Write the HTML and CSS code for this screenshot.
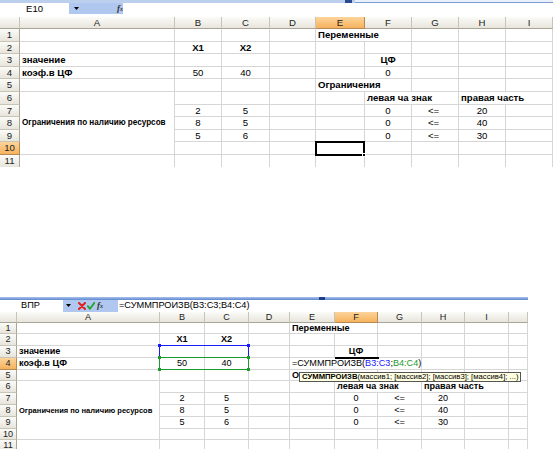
FILE: index.html
```html
<!DOCTYPE html>
<html lang="ru">
<head>
<meta charset="utf-8">
<link rel="stylesheet" href="styles.css">
</head>
<body>
<div class="page">
  <div class="sheet sheet-top">
    <div class="strip strip-top"><div class="strip-gap"></div><div class="strip-knob"></div><div class="strip-box"></div></div>
    <div class="fbar fbar-top">
      <div class="namebox">E10</div>
      <div class="fbtools">
        <svg class="dd" width="5" height="3" viewBox="0 0 5 3"><path d="M0 0h5L2.5 3z" fill="#000"/></svg>
        <span class="fx fx-top">f<small>x</small></span>
      </div>
      <div class="fbinput"></div>
    </div>
    <div class="grid g-top">
      <div class="ch"></div><div class="ch">A</div><div class="ch">B</div><div class="ch">C</div><div class="ch">D</div><div class="ch hl">E</div><div class="ch">F</div><div class="ch">G</div><div class="ch">H</div><div class="ch">I</div>

      <div class="rh">1</div><div class="c"></div><div class="c"></div><div class="c"></div><div class="c"></div><div class="c s2 b">Переменные</div><div class="c"></div><div class="c"></div><div class="c"></div>

      <div class="rh">2</div><div class="c"></div><div class="c b ctr">X1</div><div class="c b ctr">X2</div><div class="c"></div><div class="c"></div><div class="c"></div><div class="c"></div><div class="c"></div><div class="c"></div>

      <div class="rh">3</div><div class="c b">значение</div><div class="c"></div><div class="c"></div><div class="c"></div><div class="c"></div><div class="c b ctr">ЦФ</div><div class="c"></div><div class="c"></div><div class="c"></div>

      <div class="rh">4</div><div class="c b">коэф.в ЦФ</div><div class="c ctr">50</div><div class="c ctr">40</div><div class="c"></div><div class="c"></div><div class="c ctr">0</div><div class="c"></div><div class="c"></div><div class="c"></div>

      <div class="rh">5</div><div class="c"></div><div class="c"></div><div class="c"></div><div class="c"></div><div class="c s2 b">Ограничения</div><div class="c"></div><div class="c"></div><div class="c"></div>

      <div class="rh">6</div><div class="c merge b small">Ограничения по наличию ресурсов</div><div class="c"></div><div class="c"></div><div class="c"></div><div class="c"></div><div class="c s2 b">левая ча знак</div><div class="c s2 b">правая часть</div>

      <div class="rh">7</div><div class="c ctr">2</div><div class="c ctr">5</div><div class="c"></div><div class="c"></div><div class="c ctr f-val">0</div><div class="c ctr g-val">&lt;=</div><div class="c ctr">20</div><div class="c"></div>

      <div class="rh">8</div><div class="c ctr">8</div><div class="c ctr">5</div><div class="c"></div><div class="c"></div><div class="c ctr f-val">0</div><div class="c ctr g-val">&lt;=</div><div class="c ctr">40</div><div class="c"></div>

      <div class="rh">9</div><div class="c ctr">5</div><div class="c ctr">6</div><div class="c"></div><div class="c"></div><div class="c ctr f-val">0</div><div class="c ctr g-val">&lt;=</div><div class="c ctr">30</div><div class="c"></div>

      <div class="rh hl">10</div><div class="c"></div><div class="c"></div><div class="c"></div><div class="c ov"><span class="selbox"><span class="handle"></span></span></div><div class="c"></div><div class="c"></div><div class="c"></div><div class="c"></div>

      <div class="rh">11</div><div class="c"></div><div class="c"></div><div class="c"></div><div class="c"></div><div class="c"></div><div class="c"></div><div class="c"></div><div class="c"></div><div class="c"></div>
    </div>
  </div>

  <div class="sheet sheet-bottom">
    <div class="strip strip-bottom"><div class="strip-gap"></div><div class="strip-knob"></div></div>
    <div class="fbar fbar-bottom">
      <div class="namebox">ВПР</div>
      <div class="fbtools">
        <svg class="dd" width="5" height="3" viewBox="0 0 5 3"><path d="M0 0h5L2.5 3z" fill="#000"/></svg>
        <svg class="ic-x" width="8" height="8" viewBox="0 0 8 8"><path d="M1 1L7 7M7 1L1 7" stroke="#e0201c" stroke-width="2" stroke-linecap="round"/></svg>
        <svg class="ic-ok" width="8" height="8" viewBox="0 0 8 8"><path d="M0.8 4.2L3 6.8L7.4 0.8" stroke="#1fa32b" stroke-width="1.8" fill="none" stroke-linecap="round" stroke-linejoin="round"/></svg>
        <span class="fx fx-bottom">f<small>x</small></span>
      </div>
      <div class="fbinput">=СУММПРОИЗВ(B3:C3;B4:C4)</div>
    </div>
    <div class="grid g-bottom">
      <div class="ch"></div><div class="ch">A</div><div class="ch">B</div><div class="ch">C</div><div class="ch">D</div><div class="ch">E</div><div class="ch hl">F</div><div class="ch">G</div><div class="ch">H</div><div class="ch">I</div><div class="ch"></div>

      <div class="rh">1</div><div class="c"></div><div class="c"></div><div class="c"></div><div class="c"></div><div class="c s2 b">Переменные</div><div class="c"></div><div class="c"></div><div class="c"></div><div class="c"></div>

      <div class="rh">2</div><div class="c"></div><div class="c b ctr">X1</div><div class="c b ctr">X2</div><div class="c"></div><div class="c"></div><div class="c"></div><div class="c"></div><div class="c"></div><div class="c"></div><div class="c"></div>

      <div class="rh">3</div><div class="c b">значение</div><div class="c ov"><span class="rng rng-blue"><i class="k tl"></i><i class="k tr"></i><i class="k bl"></i><i class="k br"></i></span></div><div class="c"></div><div class="c"></div><div class="c"></div><div class="c b ctr">ЦФ</div><div class="c"></div><div class="c"></div><div class="c"></div><div class="c"></div>

      <div class="rh hl">4</div><div class="c b">коэф.в ЦФ</div><div class="c ctr ov">50<span class="rng rng-green"><i class="k tl"></i><i class="k tr"></i><i class="k bl"></i><i class="k br"></i></span></div><div class="c ctr">40</div><div class="c"></div><div class="c ov"><span class="editbox">=СУММПРОИЗВ(<span class="ref-blue">B3:C3</span>;<span class="ref-green">B4:C4</span>)</span></div><div class="c ov"><span class="activetop"></span></div><div class="c"></div><div class="c"></div><div class="c"></div><div class="c"></div>

      <div class="rh">5</div><div class="c"></div><div class="c"></div><div class="c"></div><div class="c"></div><div class="c s2 b ov">Ограничения<span class="tip"><b>СУММПРОИЗВ</b>(массив1; [массив2]; [массив3]; [массив4]; ...)</span></div><div class="c"></div><div class="c"></div><div class="c"></div><div class="c"></div>

      <div class="rh">6</div><div class="c merge b small">Ограничения по наличию ресурсов</div><div class="c"></div><div class="c"></div><div class="c"></div><div class="c"></div><div class="c s2 b">левая ча знак</div><div class="c s2 b">правая часть</div><div class="c"></div>

      <div class="rh">7</div><div class="c ctr">2</div><div class="c ctr">5</div><div class="c"></div><div class="c"></div><div class="c ctr f-val">0</div><div class="c ctr g-val">&lt;=</div><div class="c ctr">20</div><div class="c"></div><div class="c"></div>

      <div class="rh">8</div><div class="c ctr">8</div><div class="c ctr">5</div><div class="c"></div><div class="c"></div><div class="c ctr f-val">0</div><div class="c ctr g-val">&lt;=</div><div class="c ctr">40</div><div class="c"></div><div class="c"></div>

      <div class="rh">9</div><div class="c ctr">5</div><div class="c ctr">6</div><div class="c"></div><div class="c"></div><div class="c ctr f-val">0</div><div class="c ctr g-val">&lt;=</div><div class="c ctr">30</div><div class="c"></div><div class="c"></div>

      <div class="rh">10</div><div class="c"></div><div class="c"></div><div class="c"></div><div class="c"></div><div class="c"></div><div class="c"></div><div class="c"></div><div class="c"></div><div class="c"></div>

      <div class="rh">11</div><div class="c"></div><div class="c"></div><div class="c"></div><div class="c"></div><div class="c"></div><div class="c"></div><div class="c"></div><div class="c"></div><div class="c"></div><div class="c"></div>
    </div>
  </div>
</div>
</body>
</html>
```

FILE: styles.css
```css
* { box-sizing: border-box; }
html, body { margin: 0; padding: 0; background: #fff; }
body { font-family: "Liberation Sans", Arial, sans-serif; color: #000; }

.page { width: 553px; height: 449px; overflow: hidden; }
.sheet { overflow: hidden; }
.sheet-top { width: 553px; height: 167px; }
.sheet-bottom { width: 528px; height: 152px; margin-top: 130px; }

/* window strip */
.strip { display: flex; height: 3px; }
.strip-top { background: #bccfec; }
.strip-top .strip-gap { width: 345px; }
.strip-top .strip-knob { width: 7px; background: #2b4a92; }
.strip-top .strip-box { flex: 1; margin-left: 3px; background: #e9f0fa; border-bottom: 1px solid #7f9ed6; }
.strip-bottom { background: linear-gradient(#a9c2ec, #5d86cf); }
.strip-bottom .strip-gap { width: 319px; }
.strip-bottom .strip-knob { width: 6px; background: #1d3f8a; }

/* formula bar */
.fbar { display: flex; white-space: nowrap; }
.fbar-top { height: 11px; margin-bottom: 3px; font-size: 9.5px; line-height: 11px; }
.fbar-bottom { height: 11.5px; font-size: 9.2px; line-height: 11.5px; }
.namebox { background: #fff; text-align: center; }
.fbar-top .namebox { width: 69px; }
.fbar-bottom .namebox { width: 63px; padding-right: 2px; }
.fbtools { background: #b0c8ef; display: flex; align-items: center; }
.fbar-top .fbtools { width: 54px; padding-left: 5px; }
.fbar-bottom .fbtools { width: 55px; padding-left: 3px; }
.fbinput { flex: 1; background: #fff; padding-left: 1px; }
.fx { font-family: "Liberation Serif", serif; font-style: italic; font-weight: bold; font-size: 9px; color: #333; }
.fx small { font-size: 6px; }
.fx-top { margin-left: 38px; }
.fx-bottom { margin-left: 2px; }
.ic-x { margin-left: 7px; }
.ic-ok { margin-left: 1px; }

/* grid */
.grid { display: grid; }
.g-top {
  grid-template-columns: 20px 155px 47px 48px 46px 49px 47px 47px 47px 47px;
  grid-template-rows: 12px repeat(11, 12.6px);
  font-size: 9.6px;
  line-height: 12.6px;
}
.g-bottom {
  grid-template-columns: 17px 143px 45px 44px 41px 45px 43px 44px 43px 44px 19px;
  grid-template-rows: 11px repeat(11, 11.8px);
  font-size: 9.1px;
  line-height: 11.8px;
}
.ch, .rh {
  background: linear-gradient(#fbfbf8, #e7e5dc);
  color: #222;
  text-align: center;
  border-right: 1px solid #c8c5b7;
  border-bottom: 1px solid #c8c5b7;
  white-space: nowrap;
  overflow: hidden;
}
.g-top .ch { line-height: 11px; }
.g-bottom .ch { line-height: 10px; }
.rh { border-right-color: #a9a697; }
.ch { border-bottom-color: #a9a697; }
.ch.hl, .rh.hl { background: linear-gradient(#fcd49a, #f6b25d); border-right-color: #b58a52; border-bottom-color: #b58a52; }

.c {
  border-right: 1px solid #d6d6d6;
  border-bottom: 1px solid #d6d6d6;
  padding: 0 2px;
  white-space: nowrap;
  overflow: hidden;
}
.b { font-weight: bold; }
.ctr { text-align: center; }
.s2 { grid-column: span 2; }
.merge { grid-row: span 5; display: flex; align-items: center; }
.g-top .small { font-size: 8.15px; }
.g-bottom .small { font-size: 7.55px; }
.g-top .g-val { padding-right: 5px; }
.ov { overflow: visible; position: relative; }

/* selection on top sheet */
.selbox { position: absolute; left: -1px; top: -1px; width: 50px; height: 14.6px; border: 2px solid #000; z-index: 2; }
.handle { position: absolute; right: -3px; bottom: -3px; width: 4px; height: 4px; background: #000; border: 1px solid #fff; }

/* range highlights on bottom sheet */
.rng { position: absolute; left: -1px; top: -1px; width: 90px; height: 12.8px; border: 1px solid; z-index: 2; }
.rng-blue { border-color: #1a1aff; }
.rng-green { border-color: #1c9a2c; }
.k { position: absolute; width: 3px; height: 3px; }
.rng-blue .k { background: #1a1aff; }
.rng-green .k { background: #1c9a2c; }
.k.tl { left: -2px; top: -2px; }
.k.tr { right: -2px; top: -2px; }
.k.bl { left: -2px; bottom: -2px; }
.k.br { right: -2px; bottom: -2px; }

.editbox { position: absolute; left: 0; top: 0; width: 130px; height: 100%; background: #fff; padding-left: 2px; font-weight: normal; z-index: 3; }
.ref-blue { color: #1a1aff; }
.ref-green { color: #1c9a2c; }
.activetop { position: absolute; left: 0; top: -1px; width: 44px; height: 2px; background: #000; z-index: 4; }

.tip {
  position: absolute; left: 9px; top: 2px; height: 10px; width: 222px;
  background: #ffffe1; border: 1px solid #555;
  font-size: 7.7px; line-height: 8px; font-weight: normal;
  padding-left: 2px; z-index: 3;
}
.tip b { font-weight: bold; }
```
